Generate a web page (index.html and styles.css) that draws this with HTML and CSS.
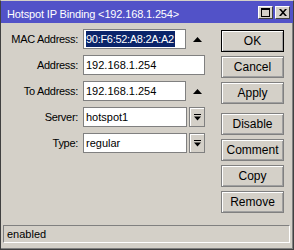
FILE: index.html
```html
<!DOCTYPE html>
<html>
<head>
<meta charset="utf-8">
<link rel="stylesheet" href="styles.css">
</head>
<body>
<div class="window">
  <div class="titlebar">
    <span class="title">Hotspot IP Binding &lt;192.168.1.254&gt;</span>
    <span class="tbtns">
      <span class="tbtn"><svg width="9" height="9" viewBox="0 0 9 9"><rect x="0.5" y="0.5" width="8" height="8" fill="none" stroke="#000"/><rect x="0" y="0" width="9" height="2" fill="#000"/></svg></span>
      <span class="tbtn"><svg width="8" height="7" viewBox="0 0 8 7"><path d="M0 0h2l2 2.2L6 0h2L5 3.5 8 7H6L4 4.8 2 7H0l3-3.5z" fill="#000"/></svg></span>
    </span>
  </div>
  <div class="main">
    <div class="form">
      <label class="lbl">MAC Address:</label>
      <div class="field">
        <div class="input short"><span class="sel">90:F6:52:A8:2A:A2</span></div>
        <span class="arrow"><svg width="9" height="5" viewBox="0 0 9 5"><path d="M4.5 0L9 5H0z" fill="#000"/></svg></span>
      </div>
      <label class="lbl">Address:</label>
      <div class="field">
        <div class="input full">192.168.1.254</div>
      </div>
      <label class="lbl">To Address:</label>
      <div class="field">
        <div class="input short">192.168.1.254</div>
        <span class="arrow"><svg width="9" height="5" viewBox="0 0 9 5"><path d="M4.5 0L9 5H0z" fill="#000"/></svg></span>
      </div>
      <label class="lbl">Server:</label>
      <div class="field">
        <div class="input short">hotspot1</div>
        <span class="dd"><svg width="7" height="7" viewBox="0 0 7 7"><rect x="0" y="0" width="7" height="1" fill="#000"/><path d="M0 2.5h7L3.5 6.5z" fill="#000"/></svg></span>
      </div>
      <label class="lbl">Type:</label>
      <div class="field">
        <div class="input short">regular</div>
        <span class="dd"><svg width="7" height="7" viewBox="0 0 7 7"><rect x="0" y="0" width="7" height="1" fill="#000"/><path d="M0 2.5h7L3.5 6.5z" fill="#000"/></svg></span>
      </div>
    </div>
    <div class="buttons">
      <div class="btn default">OK</div>
      <div class="btn">Cancel</div>
      <div class="btn">Apply</div>
      <div class="btn sep">Disable</div>
      <div class="btn">Comment</div>
      <div class="btn">Copy</div>
      <div class="btn">Remove</div>
    </div>
  </div>
  <div class="status">enabled</div>
</div>
</body>
</html>
```

FILE: styles.css
```css
html, body {
  margin: 0;
  padding: 0;
  background: #d4d0c8;
}
body {
  font-family: "Liberation Sans", Arial, sans-serif;
  font-size: 11px;
  color: #000;
}
.window {
  width: 294px;
  height: 250px;
  box-sizing: border-box;
  background: #d4d0c8;
  border: 1px solid;
  border-color: #d4d0c8 #404040 #404040 #404040;
  box-shadow: inset -1px -1px #808080;
  display: flex;
  flex-direction: column;
}
.titlebar {
  height: 22px;
  background: #5252c8;
  display: flex;
  align-items: center;
  justify-content: space-between;
  padding: 0 3px 0 6px;
  color: #fff;
}
.title {
  font-size: 11px;
  line-height: 14px;
  padding-top: 4px;
  letter-spacing: -0.15px;
}
.tbtns {
  display: flex;
  gap: 2px;
}
.tbtn {
  width: 15px;
  height: 13px;
  box-sizing: border-box;
  background: #d4d0c8;
  border: 1px solid;
  border-color: #fff #404040 #404040 #fff;
  display: flex;
  align-items: center;
  justify-content: center;
}
.main {
  flex: 1;
  display: flex;
  padding-top: 6px;
}
.form {
  display: grid;
  grid-template-columns: 77px 122px;
  grid-auto-rows: 20px;
  column-gap: 5px;
  row-gap: 6px;
  align-content: start;
}
.lbl {
  text-align: right;
  line-height: 20px;
  letter-spacing: -0.3px;
}
.field {
  display: flex;
  align-items: center;
  gap: 2px;
}
.input {
  box-sizing: border-box;
  height: 20px;
  background: #fff;
  border: 1px solid #808080;
  padding: 0 2px;
  line-height: 18px;
  white-space: nowrap;
  overflow: hidden;
}
.input.short { width: 104px; }
.input.full { width: 122px; }
.sel {
  display: inline-block;
  background: #0a246a;
  color: #fff;
  line-height: 16px;
  vertical-align: top;
  margin-top: 1px;
  letter-spacing: -0.3px;
  padding-right: 1px;
}
.arrow {
  width: 16px;
  display: flex;
  justify-content: center;
  padding-left: 1px;
}
.dd {
  box-sizing: border-box;
  width: 16px;
  height: 20px;
  border: 1px solid #808080;
  box-shadow: inset 1px 1px #fff;
  background: #d4d0c8;
  display: flex;
  align-items: center;
  justify-content: center;
}
.buttons {
  margin-left: 16px;
  margin-top: 1px;
  display: flex;
  flex-direction: column;
  gap: 4px;
}
.btn {
  box-sizing: border-box;
  width: 63px;
  height: 22px;
  border: 1px solid #808080;
  box-shadow: inset 1px 1px #fff, inset -1px -1px #a0a0a0;
  text-align: center;
  line-height: 20px;
  font-size: 12px;
}
.btn.default {
  border-color: #000;
}
.btn.sep {
  margin-top: 5px;
}
.status {
  height: 18px;
  box-sizing: border-box;
  margin: 0 3px 6px 2px;
  border: 1px solid;
  border-color: #808080 #fff #fff #808080;
  padding-left: 3px;
  line-height: 16px;
}
```
